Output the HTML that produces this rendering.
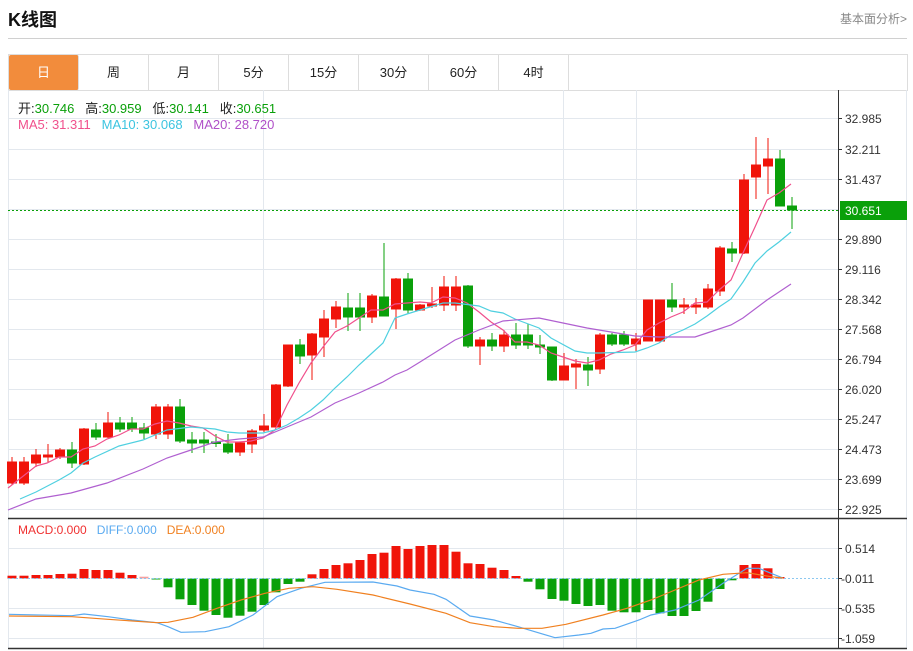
<!DOCTYPE html>
<html><head><meta charset="utf-8"><style>
body{margin:0;background:#fff;width:913px;height:651px;overflow:hidden;font-family:"Liberation Sans","Noto Sans CJK SC",sans-serif;}
.t{position:absolute;left:8px;top:6px;font-size:18px;font-weight:bold;color:#111;}
.r{position:absolute;right:6px;top:10px;font-size:12px;color:#888;}
.hl{position:absolute;left:8px;top:38px;width:899px;height:1px;background:#d0d0d0;}
.tabs{position:absolute;left:8px;top:54px;width:898px;height:35px;border:1px solid #ddd;display:flex;}
.tabs div{width:69px;border-right:1px solid #ddd;text-align:center;line-height:35px;font-size:13px;color:#222;}
.tabs div.a{background:#f28c3c;color:#fff;border-radius:2px;}
.info{position:absolute;left:18px;font-size:13px;}
</style></head><body>
<div class="t">K线图</div><div class="r">基本面分析&gt;</div><div class="hl"></div>
<div class="tabs"><div class="a">日</div><div>周</div><div>月</div><div>5分</div><div>15分</div><div>30分</div><div>60分</div><div>4时</div></div>
<svg style="position:absolute;left:0;top:0" width="913" height="651">
<g stroke="#e3e8ee" stroke-width="1">
<line x1="8" y1="118.5" x2="838" y2="118.5"/><line x1="8" y1="149.5" x2="838" y2="149.5"/><line x1="8" y1="179.5" x2="838" y2="179.5"/><line x1="8" y1="209.5" x2="838" y2="209.5"/><line x1="8" y1="239.5" x2="838" y2="239.5"/><line x1="8" y1="269.5" x2="838" y2="269.5"/><line x1="8" y1="299.5" x2="838" y2="299.5"/><line x1="8" y1="329.5" x2="838" y2="329.5"/><line x1="8" y1="359.5" x2="838" y2="359.5"/><line x1="8" y1="389.5" x2="838" y2="389.5"/><line x1="8" y1="419.5" x2="838" y2="419.5"/><line x1="8" y1="449.5" x2="838" y2="449.5"/><line x1="8" y1="479.5" x2="838" y2="479.5"/><line x1="8" y1="509.5" x2="838" y2="509.5"/>
<line x1="8" y1="548.5" x2="838" y2="548.5"/><line x1="8" y1="608.5" x2="838" y2="608.5"/><line x1="8" y1="638.5" x2="838" y2="638.5"/>
<line x1="263.5" y1="90" x2="263.5" y2="648"/><line x1="563.5" y1="90" x2="563.5" y2="648"/><line x1="636.5" y1="90" x2="636.5" y2="648"/>
<line x1="8.5" y1="90" x2="8.5" y2="648"/><line x1="906.5" y1="90" x2="906.5" y2="648"/>
</g>
<g stroke="#333" stroke-width="1.5"><line x1="8" y1="518.5" x2="907" y2="518.5"/><line x1="8" y1="648.5" x2="907" y2="648.5"/></g>
<line x1="838.5" y1="90" x2="838.5" y2="648" stroke="#333"/>
<g stroke="#333"><line x1="838" y1="118.5" x2="842" y2="118.5"/><line x1="838" y1="149.5" x2="842" y2="149.5"/><line x1="838" y1="179.5" x2="842" y2="179.5"/><line x1="838" y1="239.5" x2="842" y2="239.5"/><line x1="838" y1="269.5" x2="842" y2="269.5"/><line x1="838" y1="299.5" x2="842" y2="299.5"/><line x1="838" y1="329.5" x2="842" y2="329.5"/><line x1="838" y1="359.5" x2="842" y2="359.5"/><line x1="838" y1="389.5" x2="842" y2="389.5"/><line x1="838" y1="419.5" x2="842" y2="419.5"/><line x1="838" y1="449.5" x2="842" y2="449.5"/><line x1="838" y1="479.5" x2="842" y2="479.5"/><line x1="838" y1="509.5" x2="842" y2="509.5"/><line x1="838" y1="548.5" x2="842" y2="548.5"/><line x1="838" y1="578.5" x2="842" y2="578.5"/><line x1="838" y1="608.5" x2="842" y2="608.5"/><line x1="838" y1="638.5" x2="842" y2="638.5"/></g>
<g font-size="12" fill="#333" font-family="Liberation Sans,sans-serif">
<text x="845" y="123">32.985</text><text x="845" y="154">32.211</text><text x="845" y="184">31.437</text><text x="845" y="244">29.890</text><text x="845" y="274">29.116</text><text x="845" y="304">28.342</text><text x="845" y="334">27.568</text><text x="845" y="364">26.794</text><text x="845" y="394">26.020</text><text x="845" y="424">25.247</text><text x="845" y="454">24.473</text><text x="845" y="484">23.699</text><text x="845" y="514">22.925</text>
<text x="845" y="553">0.514</text><text x="841" y="583">-0.011</text><text x="841" y="613">-0.535</text><text x="841" y="643">-1.059</text>
</g>
<line x1="8" y1="210.5" x2="838" y2="210.5" stroke="#0aa00a" stroke-dasharray="2,2"/>
<rect x="840" y="201" width="67" height="19" fill="#0aa00a"/><text x="845" y="215" font-size="12" fill="#fff">30.651</text>
<g id="c"></g>
<!-- candles -->
<g stroke-width="1">
<g fill="#f0140a" stroke="#f0140a">
<line x1="12" y1="457" x2="12" y2="485"/><rect x="7.5" y="462" width="9" height="21"/>
<line x1="24" y1="457" x2="24" y2="485"/><rect x="19.5" y="462" width="9" height="21"/>
<line x1="36" y1="449" x2="36" y2="467"/><rect x="31.5" y="455" width="9" height="8"/>
<line x1="48" y1="444" x2="48" y2="462"/><rect x="43.5" y="455" width="9" height="2"/>
<line x1="60" y1="448" x2="60" y2="459"/><rect x="55.5" y="450" width="9" height="7"/>
<line x1="84" y1="428" x2="84" y2="465"/><rect x="79.5" y="429" width="9" height="35"/>
<line x1="108" y1="412" x2="108" y2="438"/><rect x="103.5" y="423" width="9" height="14"/>
<line x1="156" y1="404" x2="156" y2="439"/><rect x="151.5" y="407" width="9" height="27"/>
<line x1="168" y1="404" x2="168" y2="439"/><rect x="163.5" y="407" width="9" height="27"/>
<line x1="240" y1="442" x2="240" y2="456"/><rect x="235.5" y="443" width="9" height="9"/>
<line x1="252" y1="429" x2="252" y2="453"/><rect x="247.5" y="431" width="9" height="13"/>
<line x1="264" y1="414" x2="264" y2="432"/><rect x="259.5" y="426" width="9" height="4"/>
<line x1="276" y1="384" x2="276" y2="428"/><rect x="271.5" y="385" width="9" height="42"/>
<line x1="288" y1="345" x2="288" y2="387"/><rect x="283.5" y="345" width="9" height="41"/>
<line x1="312" y1="333" x2="312" y2="380"/><rect x="307.5" y="334" width="9" height="21"/>
<line x1="324" y1="310" x2="324" y2="357"/><rect x="319.5" y="319" width="9" height="18"/>
<line x1="336" y1="301" x2="336" y2="328"/><rect x="331.5" y="307" width="9" height="12"/>
<line x1="372" y1="294" x2="372" y2="323"/><rect x="367.5" y="296" width="9" height="21"/>
<line x1="396" y1="278" x2="396" y2="329"/><rect x="391.5" y="279" width="9" height="30"/>
<line x1="420" y1="304" x2="420" y2="311"/><rect x="415.5" y="305" width="9" height="5"/>
<line x1="432" y1="287" x2="432" y2="308"/><rect x="427.5" y="304" width="9" height="2"/>
<line x1="444" y1="276" x2="444" y2="311"/><rect x="439.5" y="287" width="9" height="18"/>
<line x1="456" y1="276" x2="456" y2="311"/><rect x="451.5" y="287" width="9" height="18"/>
<line x1="480" y1="337" x2="480" y2="365"/><rect x="475.5" y="340" width="9" height="6"/>
<line x1="504" y1="330" x2="504" y2="352"/><rect x="499.5" y="335" width="9" height="11"/>
<line x1="564" y1="353" x2="564" y2="380"/><rect x="559.5" y="366" width="9" height="14"/>
<line x1="576" y1="359" x2="576" y2="389"/><rect x="571.5" y="364" width="9" height="3"/>
<line x1="600" y1="333" x2="600" y2="374"/><rect x="595.5" y="335" width="9" height="34"/>
<line x1="636" y1="333" x2="636" y2="351"/><rect x="631.5" y="339" width="9" height="5"/>
<rect x="643.5" y="300" width="9" height="41"/><rect x="655.5" y="300" width="9" height="41"/>
<line x1="684" y1="298" x2="684" y2="314"/><rect x="679.5" y="305" width="9" height="2"/>
<line x1="696" y1="298" x2="696" y2="314"/><rect x="691.5" y="305" width="9" height="2"/>
<line x1="708" y1="284" x2="708" y2="309"/><rect x="703.5" y="289" width="9" height="18"/>
<line x1="720" y1="246" x2="720" y2="296"/><rect x="715.5" y="248" width="9" height="43"/>
<line x1="744" y1="174" x2="744" y2="254"/><rect x="739.5" y="180" width="9" height="73"/>
<line x1="756" y1="137" x2="756" y2="199"/><rect x="751.5" y="165" width="9" height="12"/>
<line x1="768" y1="138" x2="768" y2="194"/><rect x="763.5" y="159" width="9" height="7"/>
</g>
<g fill="#0aa00a" stroke="#0aa00a">
<line x1="72" y1="442" x2="72" y2="468"/><rect x="67.5" y="450" width="9" height="13"/>
<line x1="96" y1="423" x2="96" y2="440"/><rect x="91.5" y="430" width="9" height="7"/>
<line x1="120" y1="417" x2="120" y2="432"/><rect x="115.5" y="423" width="9" height="6"/>
<line x1="132" y1="417" x2="132" y2="432"/><rect x="127.5" y="423" width="9" height="6"/>
<line x1="144" y1="423" x2="144" y2="439"/><rect x="139.5" y="428" width="9" height="5"/>
<line x1="180" y1="399" x2="180" y2="443"/><rect x="175.5" y="407" width="9" height="34"/>
<line x1="192" y1="432" x2="192" y2="453"/><rect x="187.5" y="440" width="9" height="3"/>
<line x1="204" y1="432" x2="204" y2="453"/><rect x="199.5" y="440" width="9" height="3"/>
<line x1="216" y1="434" x2="216" y2="447"/><rect x="211.5" y="442" width="9" height="1.5"/>
<line x1="228" y1="434" x2="228" y2="454"/><rect x="223.5" y="444" width="9" height="8"/>
<line x1="300" y1="339" x2="300" y2="364"/><rect x="295.5" y="345" width="9" height="11"/>
<line x1="348" y1="293" x2="348" y2="331"/><rect x="343.5" y="308" width="9" height="9"/>
<line x1="360" y1="293" x2="360" y2="331"/><rect x="355.5" y="308" width="9" height="9"/>
<line x1="384" y1="243" x2="384" y2="316"/><rect x="379.5" y="297" width="9" height="19"/>
<line x1="408" y1="273" x2="408" y2="314"/><rect x="403.5" y="279" width="9" height="31"/>
<line x1="468" y1="285" x2="468" y2="348"/><rect x="463.5" y="286" width="9" height="60"/>
<line x1="492" y1="333" x2="492" y2="351"/><rect x="487.5" y="340" width="9" height="6"/>
<line x1="516" y1="323" x2="516" y2="349"/><rect x="511.5" y="335" width="9" height="10"/>
<line x1="528" y1="324" x2="528" y2="349"/><rect x="523.5" y="335" width="9" height="10"/>
<line x1="540" y1="335" x2="540" y2="354"/><rect x="535.5" y="345" width="9" height="2"/>
<line x1="552" y1="347" x2="552" y2="381"/><rect x="547.5" y="347" width="9" height="33"/>
<line x1="588" y1="357" x2="588" y2="386"/><rect x="583.5" y="365" width="9" height="5"/>
<line x1="612" y1="333" x2="612" y2="346"/><rect x="607.5" y="335" width="9" height="9"/>
<line x1="624" y1="331" x2="624" y2="346"/><rect x="619.5" y="335" width="9" height="9"/>
<line x1="672" y1="283" x2="672" y2="312"/><rect x="667.5" y="300" width="9" height="7"/>
<line x1="732" y1="242" x2="732" y2="262"/><rect x="727.5" y="249" width="9" height="4"/>
<line x1="780" y1="150" x2="780" y2="206"/><rect x="775.5" y="159" width="9" height="47"/>
<line x1="792" y1="197" x2="792" y2="229"/><rect x="787.5" y="206" width="9" height="4"/>
</g></g>
<g fill="none" stroke-width="1.2">
<polyline stroke="#f0508c" points="8,488 36,466 47,463 59,457 71,457 83,449 95,446 107,439 119,435 131,429 143,429 155,424 167,421 179,423 191,426 203,428 215,436 227,442 239,442 251,441 263,438 275,430 287,405 299,383 311,363 323,347 335,332 347,326 359,318 371,310 383,310 395,304 407,303 420,302 431,303 443,297 455,298 467,303 479,312 491,322 503,330 515,342 527,342 539,345 551,353 563,357 575,361 587,363 599,360 611,354 623,350 635,345 647,330 659,323 671,317 683,312 695,303 707,302 719,290 731,280 743,253 755,227 767,200 779,193 791,184"/>
<polyline stroke="#4fd0e0" points="20,499 36,492 59,480 71,473 83,463 95,457 119,446 143,440 155,435 167,430 191,427 203,428 215,429 227,432 239,433 263,433 275,430 287,425 299,418 311,410 323,400 335,388 347,377 359,365 371,354 383,343 395,318 407,314 420,310 443,303 455,303 479,306 491,311 503,313 515,319 539,328 551,338 575,351 587,353 599,353 635,352 647,348 659,343 671,335 683,330 695,324 707,316 719,307 731,299 743,282 755,263 767,251 779,242 791,232"/>
<polyline stroke="#b060d0" points="8,510 36,499 71,493 107,483 143,469 167,458 191,450 215,442 239,439 263,437 287,427 311,417 335,403 359,393 383,382 395,375 407,370 420,362 455,340 479,330 503,321 539,318 563,323 587,328 611,332 635,336 659,337 683,337 695,337 707,333 731,325 743,318 767,300 791,284"/>
</g>
<!-- MACD bars -->
<g fill="#f0140a">
<rect x="7.5" y="575.7" width="9" height="2.8"/><rect x="19.5" y="575.7" width="9" height="2.8"/><rect x="31.5" y="575" width="9" height="3.5"/><rect x="43.5" y="575" width="9" height="3.5"/><rect x="55.5" y="574" width="9" height="4.5"/><rect x="67.5" y="573.7" width="9" height="4.8"/><rect x="79.5" y="569" width="9" height="9.5"/><rect x="91.5" y="570" width="9" height="8.5"/><rect x="103.5" y="570" width="9" height="8.5"/><rect x="115.5" y="572.7" width="9" height="5.8"/><rect x="127.5" y="575" width="9" height="3.5"/><rect x="139.5" y="576.7" width="9" height="1.8" fill="#f5a0a0"/>
<rect x="307.5" y="574.3" width="9" height="4.2"/><rect x="319.5" y="569" width="9" height="9.5"/><rect x="331.5" y="565" width="9" height="13.5"/><rect x="343.5" y="563.3" width="9" height="15.2"/><rect x="355.5" y="560" width="9" height="18.5"/><rect x="367.5" y="554" width="9" height="24.5"/><rect x="379.5" y="552.7" width="9" height="25.8"/><rect x="391.5" y="546" width="9" height="32.5"/><rect x="403.5" y="549" width="9" height="29.5"/><rect x="415.5" y="546" width="9" height="32.5"/><rect x="427.5" y="545" width="9" height="33.5"/><rect x="439.5" y="545" width="9" height="33.5"/><rect x="451.5" y="551.7" width="9" height="26.8"/><rect x="463.5" y="563.3" width="9" height="15.2"/><rect x="475.5" y="564" width="9" height="14.5"/><rect x="487.5" y="567.7" width="9" height="10.8"/><rect x="499.5" y="570" width="9" height="8.5"/><rect x="511.5" y="576" width="9" height="2.5"/>
<rect x="739.5" y="565" width="9" height="13.5"/><rect x="751.5" y="564" width="9" height="14.5"/><rect x="763.5" y="568.3" width="9" height="10.2"/><rect x="775.5" y="577" width="9" height="1.5"/>
</g>
<g fill="#0aa00a">
<rect x="151.5" y="578.5" width="9" height="1"/><rect x="163.5" y="578.5" width="9" height="8.8"/><rect x="175.5" y="578.5" width="9" height="20.8"/><rect x="187.5" y="578.5" width="9" height="26.5"/><rect x="199.5" y="578.5" width="9" height="32.2"/><rect x="211.5" y="578.5" width="9" height="36.5"/><rect x="223.5" y="578.5" width="9" height="39.2"/><rect x="235.5" y="578.5" width="9" height="37.2"/><rect x="247.5" y="578.5" width="9" height="33.2"/><rect x="259.5" y="578.5" width="9" height="26.5"/><rect x="271.5" y="578.5" width="9" height="13.8"/><rect x="283.5" y="578.5" width="9" height="5.5"/><rect x="295.5" y="578.5" width="9" height="3.2"/>
<rect x="523.5" y="578.5" width="9" height="3.2"/><rect x="535.5" y="578.5" width="9" height="10.8"/><rect x="547.5" y="578.5" width="9" height="20.5"/><rect x="559.5" y="578.5" width="9" height="22.2"/><rect x="571.5" y="578.5" width="9" height="25.5"/><rect x="583.5" y="578.5" width="9" height="27.5"/><rect x="595.5" y="578.5" width="9" height="26.5"/><rect x="607.5" y="578.5" width="9" height="32.2"/><rect x="619.5" y="578.5" width="9" height="33.8"/><rect x="631.5" y="578.5" width="9" height="33.8"/><rect x="643.5" y="578.5" width="9" height="31.5"/><rect x="655.5" y="578.5" width="9" height="34.8"/><rect x="667.5" y="578.5" width="9" height="37.5"/><rect x="679.5" y="578.5" width="9" height="37.5"/><rect x="691.5" y="578.5" width="9" height="32.5"/><rect x="703.5" y="578.5" width="9" height="23.2"/><rect x="715.5" y="578.5" width="9" height="10.5"/><rect x="727.5" y="578.5" width="9" height="1.8"/>
</g>
<line x1="8" y1="578.5" x2="838" y2="578.5" stroke="#8cc8f0" stroke-dasharray="2,2"/>
<g fill="none" stroke-width="1.2">
<polyline stroke="#5aaaf0" points="9,614.3 72,615.7 84,614 108,616.7 132,620 157,622.7 168,626.7 181,632.3 205,631.7 229,626.7 253,615 277,596.7 301,588.3 325,582.3 373,582 397,586 410,590 434,594.3 446,599.3 470,616 494,620 518,626.7 555,637.7 579,635 591,633.3 603,629 615,628.3 639,620 651,615 675,610 699,600 723,583.3 747,568.3 759,568.3 771,573.3 783,578"/>
<polyline stroke="#f08020" points="9,616 72,616.7 108,619.3 157,622.7 168,622.3 193,617.3 217,608.3 241,600 265,593.3 289,588.3 313,586.7 337,589.3 373,595 410,604 446,613.3 470,622.7 494,626.7 518,628.3 542,628.3 566,624.3 603,615 627,608.3 651,600 675,590 699,580 723,574.3 747,572.7 771,576.7 783,578"/>
</g>
</svg>
<div class="info" style="top:98px"><span style="color:#222">开:</span><span style="color:#0aa00a">30.746</span>&nbsp;&nbsp; <span style="color:#222">高:</span><span style="color:#0aa00a">30.959</span>&nbsp;&nbsp; <span style="color:#222">低:</span><span style="color:#0aa00a">30.141</span>&nbsp;&nbsp; <span style="color:#222">收:</span><span style="color:#0aa00a">30.651</span></div>
<div class="info" style="top:117px"><span style="color:#f0508c">MA5: 31.311</span>&nbsp;&nbsp; <span style="color:#3cc4e0">MA10: 30.068</span>&nbsp;&nbsp; <span style="color:#b050c8">MA20: 28.720</span></div>
<div class="info" style="top:523px;font-size:12px"><span style="color:#f03030">MACD:0.000</span>&nbsp;&nbsp; <span style="color:#5aaaf0">DIFF:0.000</span>&nbsp;&nbsp; <span style="color:#f08020">DEA:0.000</span></div>
</body></html>
